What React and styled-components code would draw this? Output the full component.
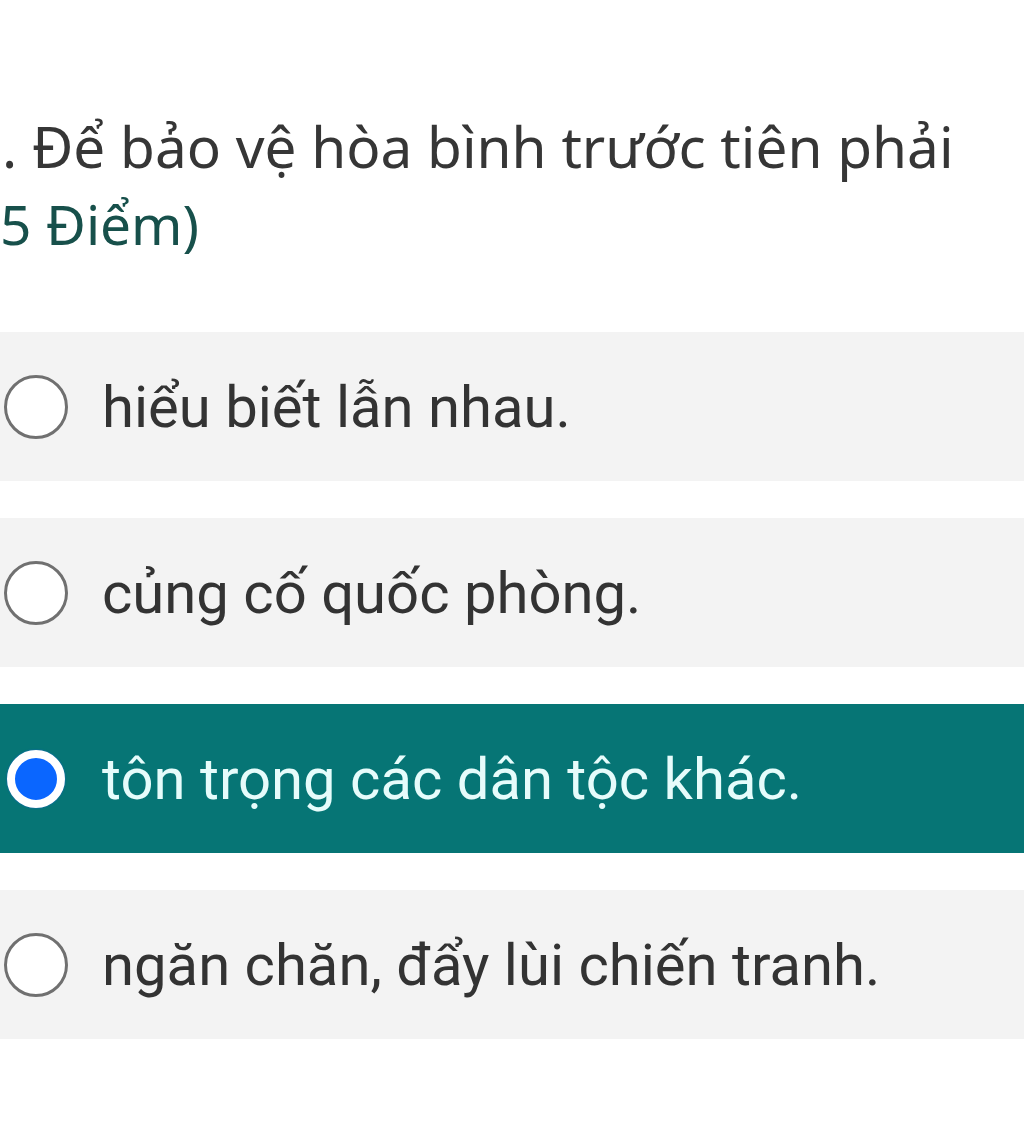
import React, { useState } from "react";
import styled, { createGlobalStyle } from "styled-components";

const GlobalStyle = createGlobalStyle`
  body {
    margin: 0;
    background: #ffffff;
  }
`;

const Page = styled.div`
  padding-top: 107px;
  padding-bottom: 100px;
`;

const Question = styled.div`
  font-family: "Noto Sans", "Open Sans", sans-serif;
  font-size: 56.7px;
  line-height: 78px;
  color: #363636;
  white-space: nowrap;
  padding-left: 2px;
`;

const Points = styled.div`
  font-family: "Noto Sans", "Open Sans", sans-serif;
  font-size: 55px;
  line-height: 78px;
  color: #17504b;
`;

const Options = styled.div`
  display: flex;
  flex-direction: column;
  gap: 37px;
  margin-top: 69px;
`;

const Row = styled.label`
  display: flex;
  align-items: center;
  height: 149px;
  gap: 34px;
  padding-left: 4px;
  background: ${(p) => (p.$selected ? "#067575" : "#f3f3f3")};
  color: ${(p) => (p.$selected ? "#e6fcfb" : "#333333")};
  font-family: Roboto, "Noto Sans", sans-serif;
  font-size: 58px;
  cursor: pointer;
`;

const Radio = styled.span`
  box-sizing: border-box;
  flex: none;
  width: 64px;
  height: 64px;
  border-radius: 50%;
  background: #ffffff;
  border: 3px solid #707070;
`;

const RadioSelected = styled.span`
  box-sizing: border-box;
  flex: none;
  width: 58px;
  height: 58px;
  margin: 0 3px;
  border-radius: 50%;
  background: #0a66ff;
  border: 8px solid #ffffff;
  box-shadow: 0 0 2px rgba(30, 90, 255, 0.6);
`;

const options = [
  "hiểu biết lẫn nhau.",
  "củng cố quốc phòng.",
  "tôn trọng các dân tộc khác.",
  "ngăn chăn, đẩy lùi chiến tranh.",
];

export default function App() {
  const [selected, setSelected] = useState(2);
  return (
    <Page>
      <GlobalStyle />
      <Question>. Để bảo vệ hòa bình trước tiên phải</Question>
      <Points>5 Điểm)</Points>
      <Options>
        {options.map((text, i) => (
          <Row key={text} $selected={i === selected} onClick={() => setSelected(i)}>
            {i === selected ? <RadioSelected /> : <Radio />}
            <span>{text}</span>
          </Row>
        ))}
      </Options>
    </Page>
  );
}
